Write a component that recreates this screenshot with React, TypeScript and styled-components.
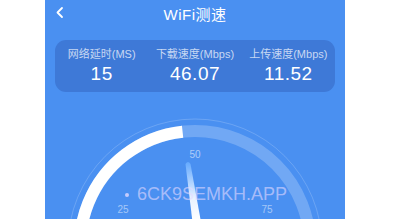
import React from "react";
import styled, { createGlobalStyle } from "styled-components";

const GlobalStyle = createGlobalStyle`
  html, body {
    margin: 0;
    padding: 0;
    background: #fff;
  }
  body {
    font-family: "Noto Sans", "Noto Sans CJK SC", sans-serif;
  }
`;

const Page = styled.div`
  width: 403px;
  height: 219px;
  overflow: hidden;
  display: flex;
`;

const Phone = styled.div`
  position: relative;
  width: 300px;
  margin-left: 45px;
  height: 219px;
  background: #4a90f1;
  display: flex;
  flex-direction: column;
  overflow: hidden;
`;

const Header = styled.div`
  position: relative;
  height: 27px;
  display: flex;
  align-items: center;
  justify-content: center;
`;

const Back = styled.svg`
  position: absolute;
  left: 10px;
  top: 6px;
`;

const Title = styled.div`
  color: #fff;
  font-size: 15px;
  font-family: "Liberation Sans", "Noto Sans CJK SC", sans-serif;
  letter-spacing: 0.5px;
  margin-top: -1px;
`;

const Card = styled.div`
  margin: 13px 10px 0;
  height: 52px;
  border-radius: 11px;
  background: #3e79d7;
  display: grid;
  grid-template-columns: repeat(3, 1fr);
`;

const Stat = styled.div`
  display: flex;
  flex-direction: column;
  align-items: center;
  padding-top: 7px;
`;

const Label = styled.div`
  font-size: 11px;
  line-height: 14px;
  color: rgba(255, 255, 255, 0.72);
  font-family: "Liberation Sans", "Noto Sans CJK SC", sans-serif;
  white-space: nowrap;
`;

const Value = styled.div`
  font-size: 19px;
  line-height: 22px;
  margin-top: 2px;
  color: #fff;
  font-family: "Liberation Sans", sans-serif;
  letter-spacing: 0.5px;
`;

const Gauge = styled.svg`
  display: block;
  margin-top: 8px;
`;

const Watermark = styled.div`
  position: absolute;
  left: 80px;
  top: 184px;
  font-size: 18px;
  font-family: "Liberation Sans", sans-serif;
  color: rgba(228, 218, 255, 0.62);
  white-space: nowrap;
  display: flex;
  align-items: center;
  gap: 8px;
`;

const Dot = styled.span`
  width: 4px;
  height: 4px;
  border-radius: 50%;
  background: rgba(228, 218, 255, 0.8);
`;

const stats = [
  { label: "网络延时(MS)", value: "15" },
  { label: "下载速度(Mbps)", value: "46.07" },
  { label: "上传速度(Mbps)", value: "11.52" },
];

const cx = 150;
const cy = 146;
const r = 115;
const pt = (deg: number, rad: number) => {
  const a = (deg * Math.PI) / 180;
  return [cx + rad * Math.sin(a), cy - rad * Math.cos(a)];
};

const App = () => {
  const [sx, sy] = pt(-130, r);
  const [ex, ey] = pt(-6.2, r);
  return (
    <Page>
      <GlobalStyle />
      <Phone>
        <Header>
          <Back width="10" height="14" viewBox="0 0 10 14">
            <polyline
              points="7,2 2.5,6.5 7,11"
              fill="none"
              stroke="#fff"
              strokeWidth="1.8"
              strokeLinecap="round"
              strokeLinejoin="round"
            />
          </Back>
          <Title>WiFi测速</Title>
        </Header>
        <Card>
          {stats.map((s) => (
            <Stat key={s.label}>
              <Label>{s.label}</Label>
              <Value>{s.value}</Value>
            </Stat>
          ))}
        </Card>
        <Gauge width="300" height="119" viewBox="0 0 300 119">
          <defs>
            <linearGradient id="needle" x1="0" y1="0" x2="0" y2="1">
              <stop offset="0" stopColor="#63a9ff" />
              <stop offset="0.6" stopColor="#e8f2ff" />
              <stop offset="1" stopColor="#ffffff" />
            </linearGradient>
          </defs>
          <circle cx={cx} cy={cy} r={127} fill="none" stroke="rgba(255,255,255,0.18)" strokeWidth="1" />
          <circle cx={cx} cy={cy} r={r} fill="none" stroke="rgba(255,255,255,0.22)" strokeWidth="12" />
          <path
            d={`M ${sx} ${sy} A ${r} ${r} 0 0 1 ${ex} ${ey}`}
            fill="none"
            stroke="#fff"
            strokeWidth="12"
          />
          <text x="150" y="58" textAnchor="middle" fontSize="10" fill="rgba(255,255,255,0.55)" fontFamily="Liberation Sans, sans-serif">50</text>
          <text x="78" y="113" textAnchor="middle" fontSize="10" fill="rgba(255,255,255,0.5)" fontFamily="Liberation Sans, sans-serif">25</text>
          <text x="222" y="113" textAnchor="middle" fontSize="10" fill="rgba(255,255,255,0.5)" fontFamily="Liberation Sans, sans-serif">75</text>
          <path
            d="M 140.5 64 Q 143 60 145.5 64 L 156 122 L 147.5 122 Z"
            fill="url(#needle)"
          />
        </Gauge>
        <Watermark>
          <Dot />
          6CK9SEMKH.APP
        </Watermark>
      </Phone>
    </Page>
  );
};

export default App;
